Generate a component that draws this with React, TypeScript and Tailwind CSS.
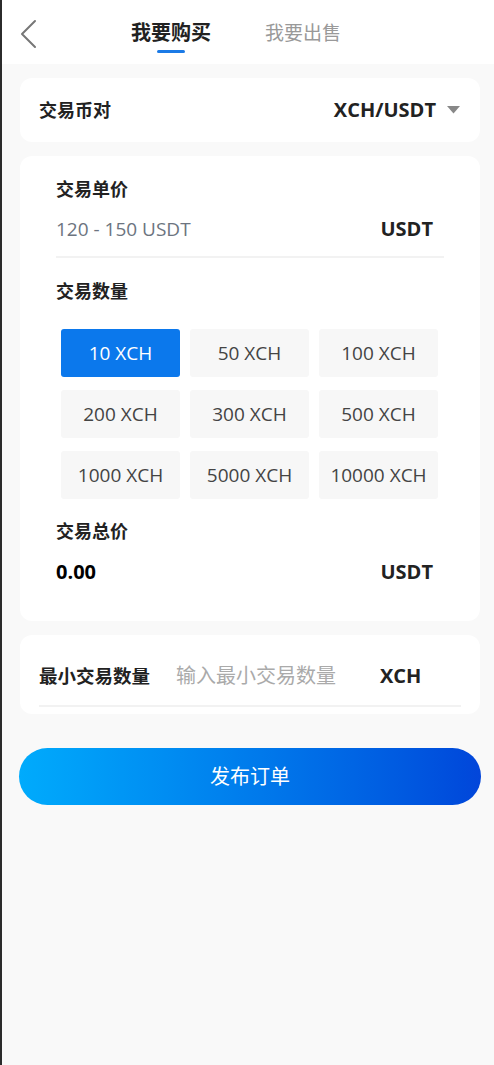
import { useState } from "react";

const amounts = [10, 50, 100, 200, 300, 500, 1000, 5000, 10000];

const font = { fontFamily: '"Open Sans", "Noto Sans CJK SC", sans-serif' };

export default function App() {
  const [tab, setTab] = useState(0);
  const [picked, setPicked] = useState(0);

  return (
    <div
      className="flex min-h-[1065px] flex-col border-l-2 border-[#2b2b2b] bg-[#f9f9f9] text-[#222]"
      style={font}
    >
      <header className="relative flex h-16 shrink-0 items-start bg-white">
        <button type="button" className="absolute left-[17px] top-[19px] text-[#777]" aria-label="back">
          <svg width="20" height="30" viewBox="0 0 20 30" fill="none">
            <path d="M16 2 L3 15 L16 28" stroke="currentColor" strokeWidth="2" strokeLinecap="round" strokeLinejoin="round" />
          </svg>
        </button>
        <div className="ml-[129px] flex gap-[54px] pt-[19px]">
          {["我要购买", "我要出售"].map((t, i) => (
            <button
              key={t}
              type="button"
              onClick={() => setTab(i)}
              className={`flex flex-col items-center leading-[28px] ${
                i === tab ? "text-[20px] font-bold text-[#222]" : "text-[19px] text-[#999]"
              }`}
            >
              {t}
              <span className={`mt-[3px] h-[3px] w-7 rounded-full ${i === tab ? "bg-[#1b7ae6]" : "bg-transparent"}`} />
            </button>
          ))}
        </div>
      </header>

      <main className="flex flex-col pl-[18px] pr-[14px] pt-[14px]">
        <section className="flex h-16 items-center justify-between rounded-xl bg-white pl-[19px] pr-[20px]">
          <span className="text-[18px] font-bold">交易币对</span>
          <span className="flex items-center gap-[11px] text-[20px] font-bold">
            XCH/USDT
            <svg width="13" height="8" viewBox="0 0 13 8">
              <path d="M0 0 H13 L6.5 7.5 Z" fill="#888" />
            </svg>
          </span>
        </section>

        <section className="mt-[14px] rounded-xl bg-white pb-[36px] pl-9 pr-9 pt-[20px]">
          <p className="text-[18px] font-bold leading-[26px]">交易单价</p>
          <div className="mt-[14px] flex items-center justify-between border-b-2 border-[#f2f2f2] pb-[14px] pr-[11px]">
            <span className="text-[19px] leading-[26px] text-[#6c7480]">120 - 150 USDT</span>
            <span className="text-[20px] font-bold leading-[26px]">USDT</span>
          </div>

          <p className="mt-[20px] text-[18px] font-bold leading-[26px]">交易数量</p>
          <div className="mt-[25px] grid grid-cols-3 gap-x-[10px] gap-y-[13px] pl-[5px] pr-[6px]">
            {amounts.map((a, i) => (
              <button
                key={a}
                type="button"
                onClick={() => setPicked(i)}
                className={`h-[48px] rounded-[3px] text-[19px] ${
                  i === picked ? "bg-[#0b78ec] text-white" : "bg-[#f7f7f7] text-[#444]"
                }`}
              >
                {a} XCH
              </button>
            ))}
          </div>

          <p className="mt-[19px] text-[18px] font-bold leading-[26px]">交易总价</p>
          <div className="mt-[15px] flex items-center justify-between pr-[11px]">
            <span className="text-[20px] font-bold leading-[26px] text-black">0.00</span>
            <span className="text-[20px] font-bold leading-[26px]">USDT</span>
          </div>
        </section>

        <section className="mt-[14px] h-[79px] rounded-xl bg-white px-[19px] pt-[27px]">
          <div className="flex h-[45px] items-start border-b-2 border-[#f2f2f2] pt-[1px]">
            <span className="text-[18.5px] font-bold leading-[26px]">最小交易数量</span>
            <input
              className="ml-[26px] w-[174px] bg-transparent text-[20px] leading-[26px] text-[#333] outline-none placeholder:text-[#aaa]"
              placeholder="输入最小交易数量"
            />
            <span className="ml-[30px] text-[20px] font-bold leading-[26px]">XCH</span>
          </div>
        </section>

        <button
          type="button"
          className="-ml-px mt-[34px] h-[57px] w-[462px] rounded-full bg-gradient-to-r from-[#01abfc] to-[#0346da] text-[20px] text-white"
        >
          发布订单
        </button>
      </main>
    </div>
  );
}
